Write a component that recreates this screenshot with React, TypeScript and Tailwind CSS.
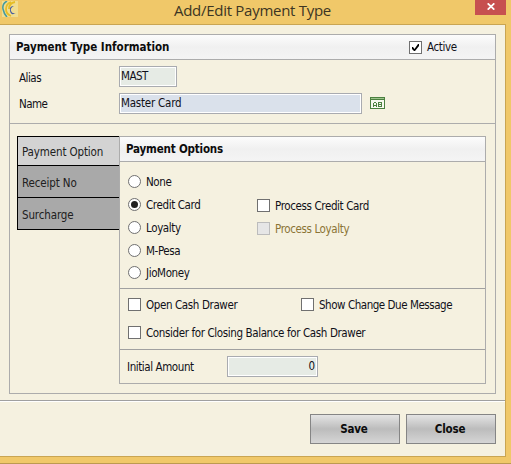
import type { ReactNode } from "react";

const boldText = "font-bold text-[#0c0c0c] whitespace-nowrap";

function Check({ label, tracking = "tracking-[-0.38px]", checked = false, disabled = false }: { label: string; tracking?: string; checked?: boolean; disabled?: boolean }) {
  return (
    <label className={`flex h-[13px] items-center gap-[5px] whitespace-nowrap ${tracking} ${disabled ? "text-[#8b7435]" : ""}`}>
      <span className={`block size-[13px] shrink-0 border ${disabled ? "border-[#bcbcbc] bg-[#e6e6e6]" : "border-[#707070] bg-white"}`}>
        {checked && (
          <svg viewBox="0 0 11 11" className="block size-[11px]">
            <path d="M2 5h1l1.5 2L8 2h1v2L5 9H4L2 7z" fill="#000" />
          </svg>
        )}
      </span>
      <span className="pt-px">{label}</span>
    </label>
  );
}

function Radio({ label, checked = false, className = "" }: { label: string; checked?: boolean; className?: string }) {
  return (
    <label className={`flex h-[13px] items-center gap-[5px] whitespace-nowrap tracking-[-0.38px] ${className}`}>
      <span className="flex size-[13px] shrink-0 items-center justify-center rounded-full border border-[#707070] bg-white">
        {checked && <span className="block size-[7px] rounded-full bg-[#202020]" />}
      </span>
      <span className="pt-px">{label}</span>
    </label>
  );
}

function Field({ className, children }: { className: string; children: ReactNode }) {
  return <div className={`flex h-[21px] shrink-0 border border-[#a9abb0] bg-white p-px ${className}`}>{children}</div>;
}

function Tab({ label, className }: { label: string; className: string }) {
  return <div className={`flex items-center border-b border-black pl-[4px] text-[11.5px] tracking-[-0.13px] text-[#202020] ${className}`}>{label}</div>;
}

function Button({ label }: { label: string }) {
  return (
    <button className={`h-[30px] w-[90px] border border-[#858585] bg-[linear-gradient(#e4e4e4,#bcbcbc_50%,#d5d5d5)] pr-[2px] pt-px text-[11.5px] tracking-[-0.2px] ${boldText}`}>
      {label}
    </button>
  );
}

export default function App() {
  return (
    <div className="flex h-[464px] w-[511px] flex-col overflow-hidden border-b border-[#bc9a50] bg-[#f0c869] font-['DejaVu_Sans_Condensed','DejaVu_Sans',sans-serif] text-[11.5px] leading-[13px] text-[#101018]">
      <header className="flex h-6 items-start">
        <svg viewBox="0 0 16 16" className="ml-[2px] mt-px size-4 shrink-0">
          <rect width="16" height="16" fill="#f1dd91" />
          <path d="M5 0Q0 3 1 8t4 8" fill="none" stroke="#459aa0" strokeWidth="1.5" />
          <path d="M9 1Q4 3 4 8t5 7M13 1Q7 2 7 8" fill="none" stroke="#e6bd26" strokeWidth="1.8" />
          <path d="M12 5Q8 7 9 10t5 2q-5 3-6-2t4-5" fill="#465ca0" />
        </svg>
        <h1 className="ml-[156px] w-[158px] whitespace-nowrap font-['Open_Sans',sans-serif] text-[15px] leading-5 tracking-[-0.28px] text-[#3c3523]">Add/Edit Payment Type</h1>
        <div className="ml-auto mr-[5px] flex h-[15px] w-[31px] items-center justify-center bg-[#c75050]">
          <svg viewBox="0 0 8 7" className="mb-[3px] mt-px h-[7px] w-2">
            <path d="M.7.3 7.3 6.7M7.3.3.7 6.7" stroke="#fff" strokeWidth="1.7" />
          </svg>
        </div>
      </header>
      <main className="flex h-[433px] w-[506px] flex-col border-y border-r border-[#c9a552] bg-[#f5f1e0]">
        <div className="h-[375px] shrink-0 pl-[9px] pt-[9px]">
          <section className="h-[360px] w-[487px] border border-[#acacac]">
            <div className="flex h-[25px] items-center border-b border-[#acacac] bg-[linear-gradient(#fcfcfc,#f0f0f0_50%,#f4f4f4)] pl-[6px]">
              <h2 className={`w-[393px] text-[11.5px] ${boldText}`}>Payment Type Information</h2>
              <Check label="Active" checked />
            </div>
            <div className="flex h-[64px] flex-col gap-[6px] border-b border-[#acacac] pt-[6px]">
              <div className="flex">
                <span className="w-[109px] pl-[9px] pt-[6px] tracking-[-0.5px]">Alias</span>
                <Field className="w-[58px]"><div className="flex-1 bg-[#e6ebe5] pt-[2px] tracking-[-0.5px]">MAST</div></Field>
              </div>
              <div className="flex">
                <span className="w-[109px] pl-[9px] pt-[5px] tracking-[-0.55px]">Name</span>
                <Field className="w-[243px]"><div className="flex-1 bg-[#dae1eb] pt-[2px] tracking-[-0.22px]">Master Card</div></Field>
                <svg viewBox="0 0 15 12" shapeRendering="crispEdges" className="ml-2 mt-1 h-3 w-[15px]">
                  <rect width="15" height="12" fill="#4b8040" />
                  <path d="M1 1h13v1H1z" fill="#9dc58c" />
                  <path d="M1 3h13v8H1z" fill="#f7f8ef" />
                  <path d="M4 5h2v1H4zM3 6h1v4H3zM6 6h1v4H6zM4 8h2v1H4zM8 5h1v5H8zM9 5h2v1H9zM9 7h2v1H9zM9 9h2v1H9zM11 5h1v5h-1z" fill="#4b8040" />
                </svg>
              </div>
            </div>
            <div className="flex pl-[7px] pt-3">
              <nav className="h-[94px] w-[102px] border-l border-t border-black">
                <Tab label="Payment Option" className="h-[29px] bg-[#d3d3d3] pt-[3px]" />
                <Tab label="Receipt No" className="h-8 bg-[#a9a9a9] pt-[3px]" />
                <Tab label="Surcharge" className="h-8 bg-[#a9a9a9] pt-[3px]" />
              </nav>
              <section className="h-[248px] w-[367px] border border-[#acacac]">
                <h2 className={`flex h-[25px] items-center border-b border-[#acacac] bg-[linear-gradient(#fcfcfc,#f0f0f0_50%,#f4f4f4)] pl-[6px] text-[11.5px] tracking-[-0.18px] ${boldText}`}>Payment Options</h2>
                <div className="flex h-[127px] border-b border-[#a0a0a0] pl-2">
                  <div className="flex w-[129px] flex-col pt-[13px]">
                    <Radio label="None" />
                    <Radio label="Credit Card" checked className="mt-[10px]" />
                    <Radio label="Loyalty" className="mt-[10px]" />
                    <Radio label="M-Pesa" className="mt-[10px]" />
                    <Radio label="JioMoney" className="mt-[9px]" />
                  </div>
                  <div className="flex flex-col gap-[10px] pt-[37px]">
                    <Check label="Process Credit Card" />
                    <Check label="Process Loyalty" disabled />
                  </div>
                </div>
                <div className="h-[61px] border-b border-[#a0a0a0] pl-2 pt-[9px]">
                  <div className="flex">
                    <div className="w-[173px]"><Check label="Open Cash Drawer" /></div>
                    <Check label="Show Change Due Message" tracking="tracking-[-0.46px]" />
                  </div>
                  <div className="mt-[15px]"><Check label="Consider for Closing Balance for Cash Drawer" /></div>
                </div>
                <div className="flex pt-[6px]">
                  <span className="w-[107px] pl-[7px] pt-[5px] tracking-[-0.42px]">Initial Amount</span>
                  <Field className="w-[91px]"><div className="flex-1 bg-[#e6ebe5] pr-px pt-[2px] text-right">0</div></Field>
                </div>
              </section>
            </div>
          </section>
        </div>
        <footer className="flex h-[56px] justify-end gap-[6px] border-t border-[#a0a0a0] pr-[9px] pt-[13px] shadow-[inset_0_1px_0_#fff]">
          <Button label="Save" />
          <Button label="Close" />
        </footer>
      </main>
    </div>
  );
}
